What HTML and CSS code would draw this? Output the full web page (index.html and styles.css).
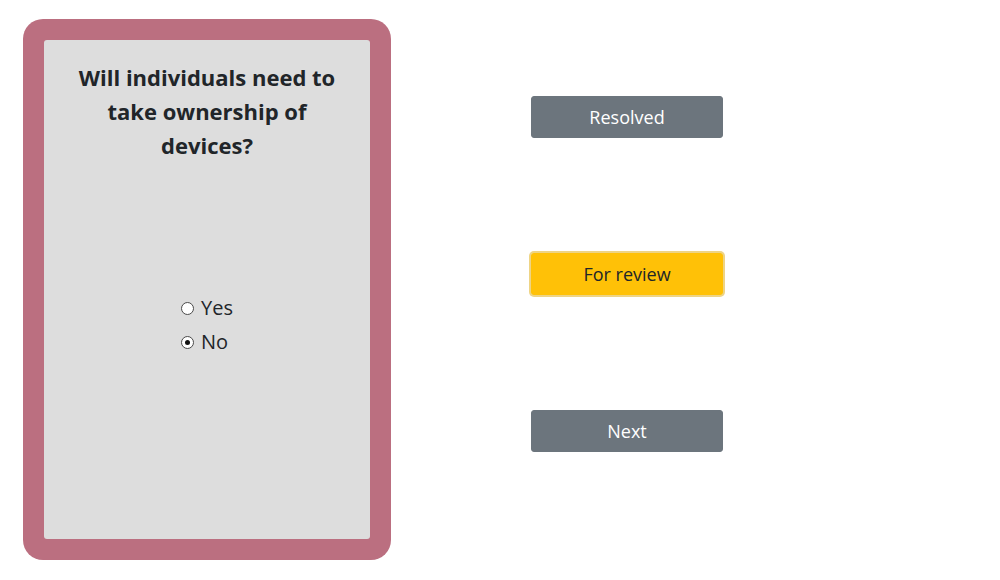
FILE: index.html
```html
<!DOCTYPE html>
<html>
<head>
<meta charset="utf-8">
<link rel="stylesheet" href="styles.css">
</head>
<body>
<div class="page">
  <div class="card">
    <div class="card-inner">
      <h2 class="question">Will individuals need to take ownership of devices?</h2>
      <div class="options">
        <label class="option"><input type="radio" name="q" value="yes"> Yes</label>
        <label class="option"><input type="radio" name="q" value="no" checked> No</label>
      </div>
    </div>
  </div>
  <div class="actions">
    <button class="btn btn-secondary">Resolved</button>
    <button class="btn btn-warning focused">For review</button>
    <button class="btn btn-secondary">Next</button>
  </div>
</div>
</body>
</html>
```

FILE: styles.css
```css
html, body {
  margin: 0;
  padding: 0;
  background: #ffffff;
  font-family: "Open Sans", "Noto Sans", sans-serif;
  color: #212529;
}

.page {
  display: flex;
  align-items: flex-start;
  padding: 19px 0 0 23px;
}

.card {
  width: 368px;
  height: 541px;
  box-sizing: border-box;
  padding: 21px;
  background: #bb6f80;
  border-radius: 20px;
  display: flex;
}

.card-inner {
  flex: 1;
  background: #dddddd;
  border-radius: 3px;
  display: flex;
  flex-direction: column;
  align-items: center;
}

.question {
  margin: 20px 0 0;
  padding: 0 28px;
  font-size: 22px;
  line-height: 34px;
  font-weight: 700;
  text-align: center;
  color: #212529;
}

.options {
  margin-top: 129px;
  display: flex;
  flex-direction: column;
}

.option {
  display: flex;
  align-items: center;
  font-size: 20px;
  line-height: 34px;
  color: #212529;
}

.option input {
  appearance: none;
  -webkit-appearance: none;
  margin: 0 7px 0 0;
  width: 13px;
  height: 13px;
  box-sizing: border-box;
  border: 1px solid #4a4a4a;
  border-radius: 50%;
  background: #ffffff;
  display: grid;
  place-items: center;
}

.option input:checked::before {
  content: "";
  width: 5px;
  height: 5px;
  border-radius: 50%;
  background: #111111;
}

.actions {
  margin-left: 140px;
  padding-top: 77px;
  display: flex;
  flex-direction: column;
  gap: 115px;
}

.btn {
  width: 192px;
  height: 42px;
  border: 1px solid transparent;
  border-radius: 3px;
  font-family: "Open Sans", "Noto Sans", sans-serif;
  font-size: 18px;
  cursor: pointer;
}

.btn-secondary {
  background: #6c757d;
  border-color: #6c757d;
  color: #ffffff;
}

.btn-warning {
  background: #ffc107;
  border-color: #ffc107;
  color: #212529;
}

.btn-warning.focused {
  box-shadow: 0 0 0 2px rgba(222, 170, 12, 0.5);
}
```
